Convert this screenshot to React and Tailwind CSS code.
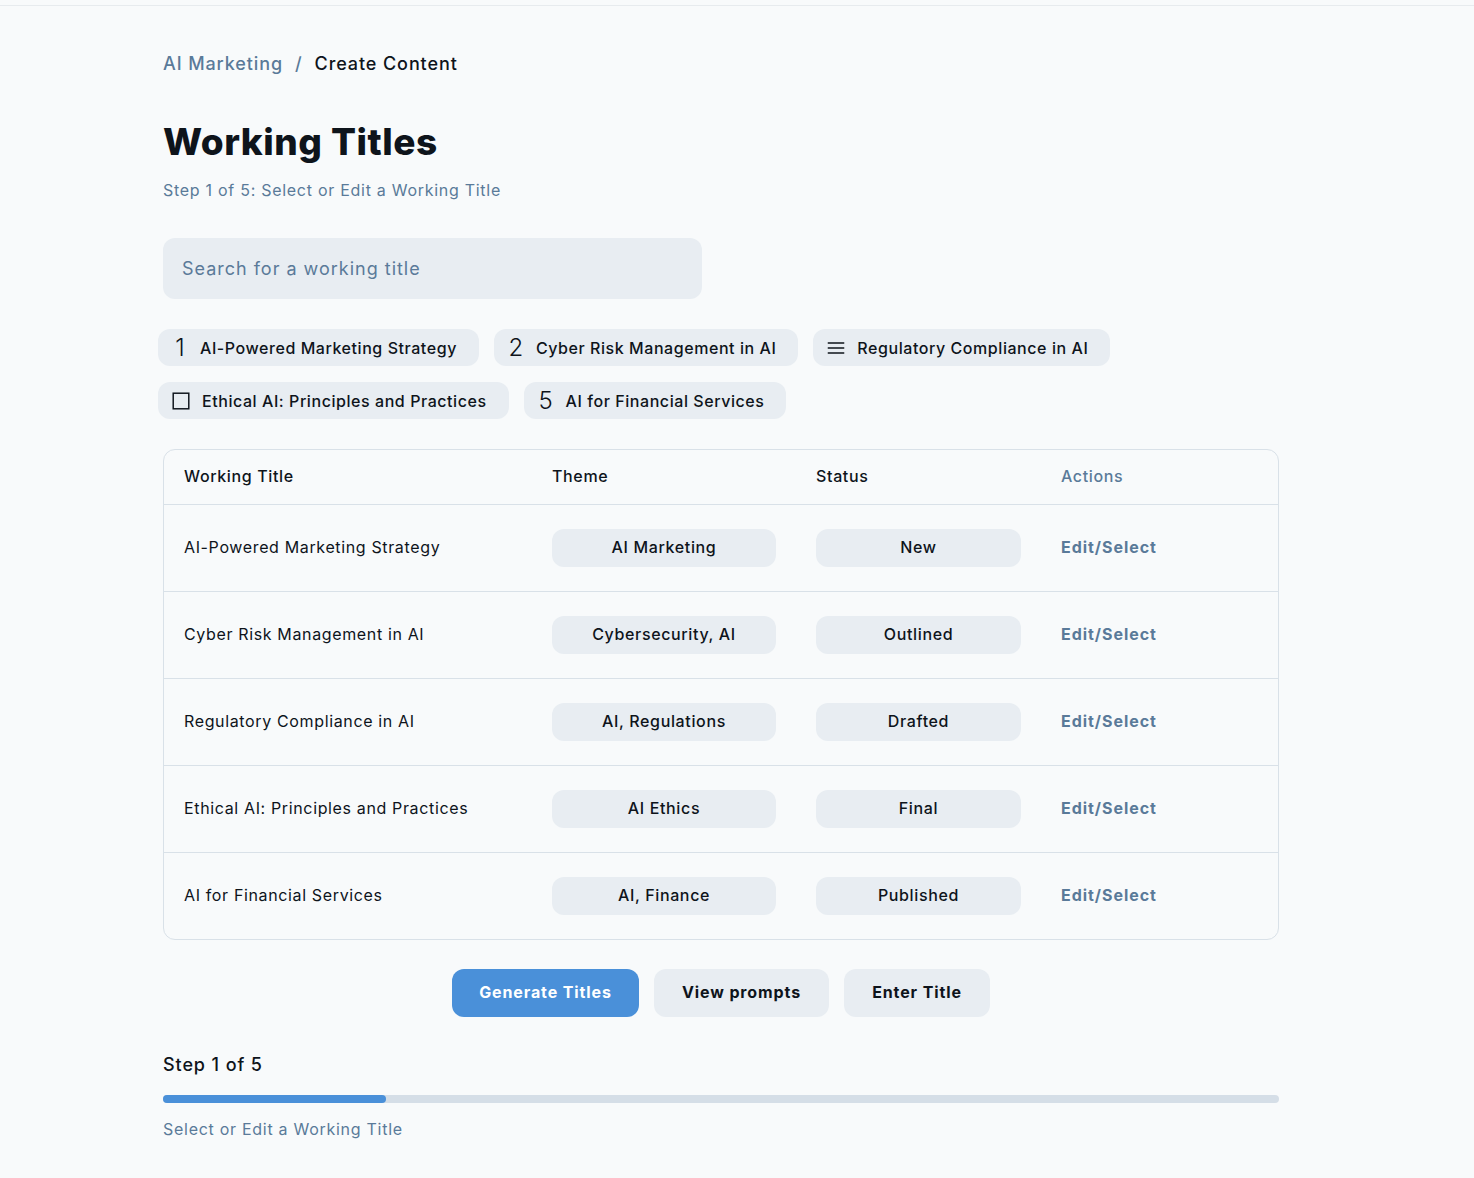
import React from "react";

const chips1 = [
  { icon: "1", label: "AI-Powered Marketing Strategy" },
  { icon: "2", label: "Cyber Risk Management in AI" },
  { icon: "menu", label: "Regulatory Compliance in AI" },
];
const chips2 = [
  { icon: "box", label: "Ethical AI: Principles and Practices" },
  { icon: "5", label: "AI for Financial Services" },
];

const rows = [
  ["AI-Powered Marketing Strategy", "AI Marketing", "New"],
  ["Cyber Risk Management in AI", "Cybersecurity, AI", "Outlined"],
  ["Regulatory Compliance in AI", "AI, Regulations", "Drafted"],
  ["Ethical AI: Principles and Practices", "AI Ethics", "Final"],
  ["AI for Financial Services", "AI, Finance", "Published"],
];

function ChipIcon({ icon }) {
  if (icon === "menu") {
    return (
      <svg width="22" height="22" viewBox="0 0 24 24" className="text-[#0e141b]">
        <path d="M3 6.5h18M3 12h18M3 17.5h18" stroke="currentColor" strokeWidth="1.6" fill="none" />
      </svg>
    );
  }
  if (icon === "box") {
    return (
      <svg width="22" height="22" viewBox="0 0 24 24" className="text-[#0e141b]">
        <rect x="3.5" y="3.5" width="17" height="17" stroke="currentColor" strokeWidth="1.6" fill="none" />
      </svg>
    );
  }
  return (
    <span className="w-[20px] text-center text-[24px] leading-none font-light tracking-normal text-[#0e141b]">{icon}</span>
  );
}

function Chip({ icon, label }) {
  return (
    <div className="flex h-[37px] items-center gap-[10px] rounded-xl bg-[#e8edf2] pl-[12px] pr-[22px]">
      <ChipIcon icon={icon} />
      <span className="text-[16px] font-medium tracking-[0.035em] text-[#0e141b]">{label}</span>
    </div>
  );
}

export default function App() {
  return (
    <div
      className="min-h-[1178px] bg-[#f8fafb] text-[#0e141b] tracking-[0.04em]"
      style={{ fontFamily: "Inter, 'Noto Sans', sans-serif" }}
    >
      <div className="h-[6px] border-b border-[#e7ebee]" />
      <div className="w-[1116px] ml-[163px] pt-[45px]">
        <div className="flex items-center gap-[12px] text-[18px] font-medium leading-[26px] tracking-[0.05em]">
          <span className="text-[#5a7a99]">AI Marketing</span>
          <span className="text-[#5a7a99]">/</span>
          <span className="text-[#0e141b]">Create Content</span>
        </div>
        <h1 className="mt-[44px] text-[37px] font-extrabold leading-[42px] tracking-[0.5px]">Working Titles</h1>
        <p className="mt-[15px] text-[16px] leading-[24px] tracking-[0.045em] text-[#5a7a99]">Step 1 of 5: Select or Edit a Working Title</p>

        <div className="mt-[36px] flex h-[61px] w-[539px] items-center rounded-xl bg-[#e8edf2] px-[19px]">
          <span className="text-[18px] tracking-[0.055em] text-[#5a7a99]">Search for a working title</span>
        </div>

        <div className="-ml-[5px] mt-[30px] flex flex-col gap-[16px]">
          <div className="flex gap-[15px]">
            {chips1.map((c) => (
              <Chip key={c.label} {...c} />
            ))}
          </div>
          <div className="flex gap-[15px]">
            {chips2.map((c) => (
              <Chip key={c.label} {...c} />
            ))}
          </div>
        </div>

        <div className="mt-[30px] overflow-hidden rounded-xl border border-[#d9e1e8] bg-[#f8fafb]">
          <div className="grid h-[54px] grid-cols-[368px_264px_245px_1fr] items-center text-[16px] font-medium">
            <div className="px-5 pb-[2px]">Working Title</div>
            <div className="px-5 pb-[2px]">Theme</div>
            <div className="px-5 pb-[2px]">Status</div>
            <div className="px-5 pb-[2px] text-[#5a7a99]">Actions</div>
          </div>
          {rows.map(([title, theme, status]) => (
            <div
              key={title}
              className="grid h-[87px] grid-cols-[368px_264px_245px_1fr] items-center border-t border-[#d9e1e8] text-[16px]"
            >
              <div className="px-5 pb-[2px]">{title}</div>
              <div className="px-5">
                <div className="flex h-[38px] items-center justify-center rounded-xl bg-[#e8edf2] pb-[3px] font-medium">{theme}</div>
              </div>
              <div className="px-5">
                <div className="flex h-[38px] items-center justify-center rounded-xl bg-[#e8edf2] pb-[3px] font-medium">{status}</div>
              </div>
              <div className="px-5 pb-[2px] font-bold tracking-[0.06em] text-[#5a7a99]">Edit/Select</div>
            </div>
          ))}
        </div>

        <div className="mt-[29px] flex justify-center gap-[15px] text-[16px] font-bold tracking-[0.055em]">
          <button className="h-[48px] w-[187px] rounded-xl bg-[#4a90d9] pb-[2px] text-white">Generate Titles</button>
          <button className="h-[48px] w-[175px] rounded-xl bg-[#e8edf2] pb-[2px] text-[#0e141b]">View prompts</button>
          <button className="h-[48px] w-[146px] rounded-xl bg-[#e8edf2] pb-[2px] text-[#0e141b]">Enter Title</button>
        </div>

        <div className="mt-[35px] text-[18px] font-medium leading-[26px] tracking-[0.05em]">Step 1 of 5</div>
        <div className="mt-[17px] h-2 w-full rounded-full bg-[#d5dee7]">
          <div className="h-full rounded-full bg-[#4a90d9]" style={{ width: "20%" }} />
        </div>
        <p className="mt-[14px] text-[16px] leading-[24px] tracking-[0.045em] text-[#5a7a99]">Select or Edit a Working Title</p>
      </div>
    </div>
  );
}
